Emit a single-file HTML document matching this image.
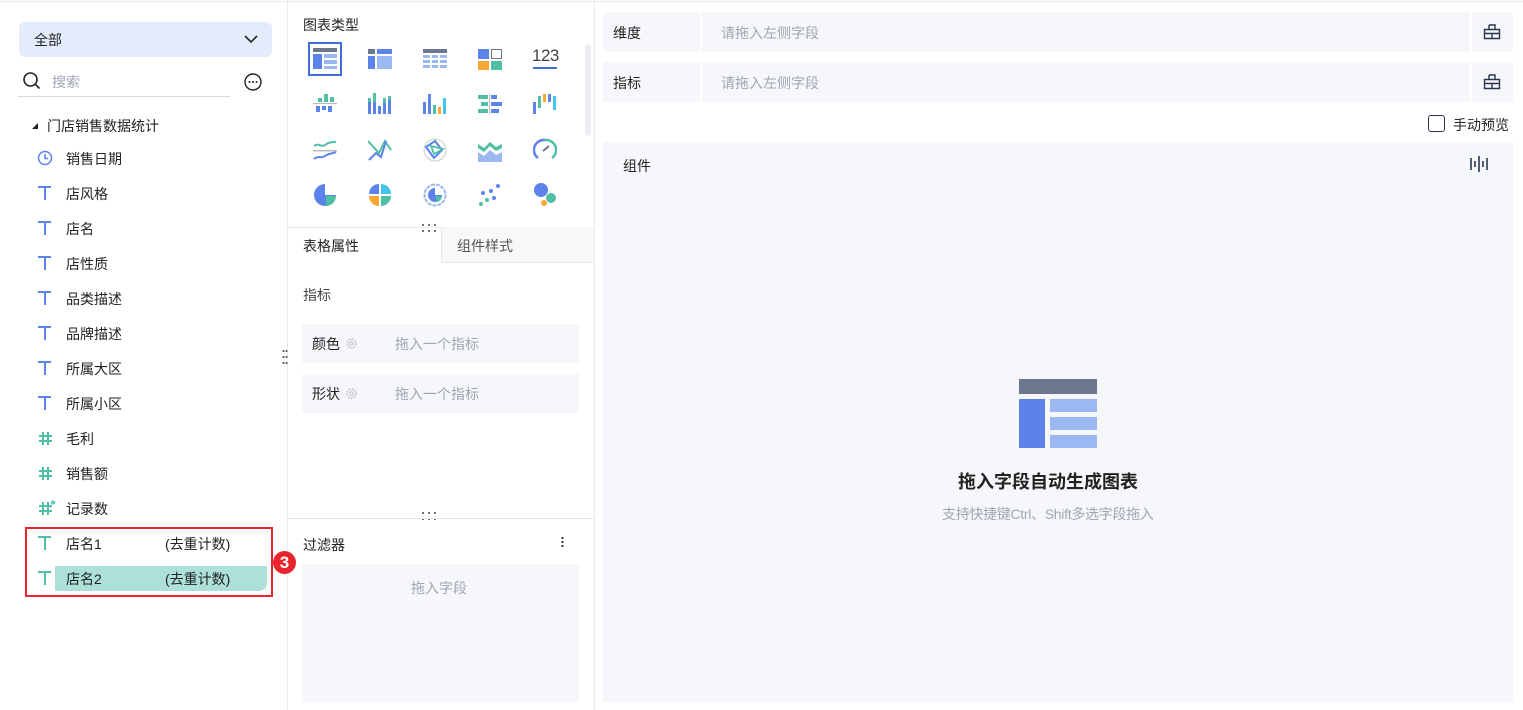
<!DOCTYPE html>
<html><head><meta charset="utf-8"><style>
*{margin:0;padding:0;box-sizing:border-box}
body{width:1523px;height:710px;overflow:hidden;background:#fff;font-family:"Liberation Sans","Noto Sans CJK SC",sans-serif;font-size:14px;color:#1f2d3d;position:relative}
.a{position:absolute}
.t{font-size:14px;color:#222}
.ph{color:#a0a6b3}
svg{position:absolute}
.ti{position:absolute;left:38px;width:14px;height:14px}.ti:before{content:"";position:absolute;left:0;top:0;width:13px;height:2px;background:#5b83ea}.ti:after{content:"";position:absolute;left:5.5px;top:0;width:2px;height:14px;background:#5b83ea}
.tg:before,.tg:after{background:#4fbfa6}
</style></head><body>
<div class="a" style="left:0;top:1px;width:1523px;height:1px;background:#e8eaef"></div>
<div class="a" style="left:287px;top:0;width:1px;height:710px;background:#e8eaef"></div>
<div class="a" style="left:594px;top:0;width:1px;height:710px;background:#e8eaef"></div>

<!-- left -->
<div class="a" style="left:19px;top:22px;width:253px;height:35px;background:#e4ecfc;border-radius:6px"></div>
<div class="a t" style="left:34px;top:30px">全部</div>
<svg style="left:243px;top:33px" width="16" height="12"><path d="M2 3l6 6 6-6" stroke="#222" stroke-width="1.6" fill="none"/></svg>
<svg style="left:22px;top:71px" width="20" height="20"><circle cx="8.5" cy="8.5" r="6.5" stroke="#222" stroke-width="1.6" fill="none"/><path d="M13.5 13.5l4 4" stroke="#222" stroke-width="1.6"/></svg>
<div class="a ph" style="left:52px;top:72px">搜索</div>
<div class="a" style="left:18px;top:96px;width:212px;height:1px;background:#d8dbe2"></div>
<svg style="left:243px;top:72px" width="20" height="20"><circle cx="10" cy="10" r="8" stroke="#222" stroke-width="1.4" fill="none"/><circle cx="6.5" cy="10" r="1" fill="#222"/><circle cx="10" cy="10" r="1" fill="#222"/><circle cx="13.5" cy="10" r="1" fill="#222"/></svg>
<svg style="left:31px;top:122px" width="8" height="8"><path d="M1 7h6V1z" fill="#222"/></svg>
<div class="a t" style="left:47px;top:116px">门店销售数据统计</div>
<svg style="left:37px;top:150px" width="16" height="16"><circle cx="8" cy="8" r="6.5" stroke="#5b83ea" stroke-width="1.5" fill="none"/><path d="M8 4v4.5h3" stroke="#5b83ea" stroke-width="1.5" fill="none"/></svg>
<div class="a t" style="left:66px;top:149px">销售日期</div>
<span class="ti" style="top:186px"></span><div class="a t" style="left:66px;top:184px">店风格</div>
<span class="ti" style="top:221px"></span><div class="a t" style="left:66px;top:219px">店名</div>
<span class="ti" style="top:256px"></span><div class="a t" style="left:66px;top:254px">店性质</div>
<span class="ti" style="top:291px"></span><div class="a t" style="left:66px;top:289px">品类描述</div>
<span class="ti" style="top:326px"></span><div class="a t" style="left:66px;top:324px">品牌描述</div>
<span class="ti" style="top:361px"></span><div class="a t" style="left:66px;top:359px">所属大区</div>
<span class="ti" style="top:396px"></span><div class="a t" style="left:66px;top:394px">所属小区</div>
<svg style="left:38px;top:431px" width="15" height="15"><path d="M5 1v13M10 1v13M1 5h13M1 10h13" stroke="#4fbfa6" stroke-width="2"/></svg><div class="a t" style="left:66px;top:429px">毛利</div>
<svg style="left:38px;top:466px" width="15" height="15"><path d="M5 1v13M10 1v13M1 5h13M1 10h13" stroke="#4fbfa6" stroke-width="2"/></svg><div class="a t" style="left:66px;top:464px">销售额</div>
<svg style="left:38px;top:499px" width="18" height="17"><path d="M5 3v13M10 3v13M1 7h13M1 12h13" stroke="#4fbfa6" stroke-width="2"/><path d="M15 1v5M12.8 2.5l4.4 2M12.8 4.5l4.4-2" stroke="#4fbfa6" stroke-width="1"/></svg><div class="a t" style="left:66px;top:499px">记录数</div>
<div class="a" style="left:25px;top:527px;width:248px;height:70px;border:2px solid #e8252d"></div>
<span class="ti tg" style="top:536px"></span><div class="a t" style="left:66px;top:534px">店名1</div><div class="a t" style="left:165px;top:534px">(去重计数)</div>
<div class="a" style="left:55px;top:566px;width:212px;height:25px;background:#ace0d9;border-radius:0 0 8px 0"></div>
<span class="ti tg" style="top:571px"></span><div class="a t" style="left:66px;top:569px">店名2</div><div class="a t" style="left:165px;top:569px">(去重计数)</div>
<div class="a" style="left:273px;top:551px;width:23px;height:23px;border-radius:50%;background:#e8252d;color:#fff;font-weight:bold;font-size:17px;text-align:center;line-height:23px">3</div>
<div class="a" style="left:282px;top:348px;width:6px;height:18px;background:radial-gradient(circle,#555 0.8px,transparent 1.2px) 0 0/3px 6px"></div>

<!-- middle -->
<div class="a t" style="left:303px;top:15px">图表类型</div>
<div class="a" style="left:585px;top:44px;width:6px;height:92px;background:#edeef2;border-radius:3px"></div>
<div class="a" style="left:308px;top:42px;width:34px;height:34px;border:2px solid #3f6ed8"></div>
<svg style="left:313px;top:47px" width="24" height="24"><rect x="0" y="1" width="24" height="4" fill="#6b778c"/><rect x="0" y="7" width="9" height="15" fill="#5b83ea"/><rect x="11" y="7" width="13" height="4" fill="#9cb8f3"/><rect x="11" y="13" width="13" height="4" fill="#9cb8f3"/><rect x="11" y="19" width="13" height="3" fill="#9cb8f3"/></svg>
<svg style="left:368px;top:47px" width="24" height="24"><rect x="0" y="2" width="7" height="5" fill="#6b778c"/><rect x="9" y="2" width="15" height="5" fill="#5b83ea"/><rect x="0" y="9" width="7" height="13" fill="#5b83ea"/><rect x="9" y="9" width="15" height="13" fill="#9cb8f3"/></svg>
<svg style="left:423px;top:47px" width="24" height="24"><rect x="0" y="2" width="24" height="4" fill="#6b778c"/><g fill="#9cb8f3"><rect x="0" y="8" width="7" height="3"/><rect x="9" y="8" width="6" height="3"/><rect x="17" y="8" width="7" height="3"/><rect x="0" y="13" width="7" height="3"/><rect x="9" y="13" width="6" height="3"/><rect x="17" y="13" width="7" height="3"/><rect x="0" y="18" width="7" height="3"/><rect x="9" y="18" width="6" height="3"/><rect x="17" y="18" width="7" height="3"/></g></svg>
<svg style="left:478px;top:47px" width="24" height="24"><rect x="0" y="2" width="11" height="10" fill="#5b83ea"/><rect x="13.5" y="2.5" width="10" height="9" fill="none" stroke="#6b778c"/><rect x="0" y="14" width="11" height="9" fill="#f7a734"/><rect x="13" y="14" width="11" height="9" fill="#4fbfa6"/></svg>
<div class="a" style="left:532px;top:46px;font-size:17px;color:#444;letter-spacing:-0.5px">123</div>
<div class="a" style="left:533px;top:67px;width:24px;height:2px;background:#3f6ed8"></div>
<svg style="left:313px;top:92px" width="24" height="24"><rect x="0" y="11" width="24" height="1" fill="#bbb"/><g fill="#4fbfa6"><rect x="5" y="6" width="4" height="4"/><rect x="11" y="2" width="4" height="8"/><rect x="17" y="5" width="4" height="5"/></g><g fill="#5b83ea"><rect x="3" y="14" width="4" height="6"/><rect x="9" y="14" width="4" height="4"/><rect x="15" y="14" width="4" height="6"/></g></svg>
<svg style="left:368px;top:92px" width="24" height="24"><g fill="#5b83ea"><rect x="0" y="10" width="3" height="12"/><rect x="5" y="10" width="3" height="12"/><rect x="10" y="14" width="3" height="8"/><rect x="15" y="11" width="3" height="11"/><rect x="20" y="8" width="3" height="14"/></g><g fill="#4fbfa6"><rect x="0" y="6" width="3" height="4"/><rect x="5" y="1" width="3" height="9"/><rect x="15" y="6" width="3" height="5"/><rect x="20" y="4" width="3" height="4"/></g></svg>
<svg style="left:423px;top:92px" width="24" height="24"><rect x="0" y="10" width="3" height="12" fill="#5b83ea"/><rect x="5" y="2" width="3" height="20" fill="#5b83ea"/><rect x="10" y="13" width="3" height="9" fill="#4fbfa6"/><rect x="15" y="15" width="3" height="7" fill="#f7a734"/><rect x="20" y="6" width="3" height="16" fill="#44c3ef"/></svg>
<svg style="left:478px;top:92px" width="24" height="24"><g fill="#4fbfa6"><rect x="0" y="3" width="10" height="4"/><rect x="3" y="10" width="7" height="4"/><rect x="0" y="17" width="10" height="4"/></g><rect x="11" y="2" width="1" height="20" fill="#bbb"/><g fill="#5b83ea"><rect x="13" y="3" width="6" height="4"/><rect x="13" y="10" width="11" height="4"/><rect x="13" y="17" width="8" height="4"/></g></svg>
<svg style="left:533px;top:92px" width="24" height="24"><rect x="0" y="10" width="3" height="12" fill="#5b83ea"/><rect x="5" y="4" width="3" height="12" fill="#4fbfa6"/><rect x="10" y="2" width="3" height="8" fill="#f7a734"/><rect x="15" y="2" width="3" height="8" fill="#5b83ea"/><rect x="20" y="4" width="3" height="14" fill="#44c3ef"/></svg>
<svg style="left:313px;top:138px" width="24" height="24"><path d="M1 8c4-4 7 2 11-1s7-3 11-3" stroke="#4fbfa6" stroke-width="2" fill="none"/><rect x="0" y="12" width="24" height="1.5" fill="#bbb"/><path d="M1 21c4-4 7 0 11-3s7-2 11-4" stroke="#5b83ea" stroke-width="2" fill="none"/></svg>
<svg style="left:368px;top:138px" width="24" height="24"><path d="M0 3l11 12 6-12 6 9" stroke="#4fbfa6" stroke-width="2" fill="none"/><path d="M1 22l7-7 5 4 5-16" stroke="#5b83ea" stroke-width="2" fill="none"/></svg>
<svg style="left:423px;top:138px" width="24" height="24"><circle cx="12" cy="12" r="11" stroke="#ccc" fill="none"/><path d="M3 9l9-6 7 9-8 8z" stroke="#5b83ea" stroke-width="2" fill="none"/><path d="M8 8l12 3-9 5z" stroke="#4fbfa6" stroke-width="1.8" fill="none"/></svg>
<svg style="left:478px;top:138px" width="24" height="24"><path d="M0 6l6 4 6-6 6 5 6-3v4l-6 3-6-5-6 6-6-4z" fill="#4fbfa6"/><path d="M0 14l6 4 6-6 6 5 6-3v10H0z" fill="#9cb8f3"/></svg>
<svg style="left:533px;top:138px" width="24" height="24"><path d="M5 20A10 10 0 0 1 12 2" stroke="#5b83ea" stroke-width="2.5" fill="none"/><path d="M12 2A10 10 0 0 1 19 20" stroke="#4fbfa6" stroke-width="2.5" fill="none"/><path d="M10 13l6-5" stroke="#6b778c" stroke-width="2"/></svg>
<svg style="left:313px;top:183px" width="24" height="24"><path d="M12 12V1A11 11 0 1 0 23 12z" fill="#5b83ea"/><path d="M13 13h10A10 10 0 0 1 13 23z" fill="#4fbfa6"/></svg>
<svg style="left:368px;top:183px" width="24" height="24"><path d="M11 11V1A10 10 0 0 0 1 11z" fill="#5b83ea"/><path d="M13 11V1A10 10 0 0 1 23 11z" fill="#44c3ef"/><path d="M11 13H1A10 10 0 0 0 11 23z" fill="#f7a734"/><path d="M13 13h10A10 10 0 0 1 13 23z" fill="#4fbfa6"/></svg>
<svg style="left:423px;top:183px" width="24" height="24"><circle cx="12" cy="12" r="10.5" stroke="#9cb8f3" stroke-width="2" fill="none" stroke-dasharray="4 1"/><path d="M12 12V5A7 7 0 1 0 19 12z" fill="#5b83ea"/><path d="M13 13h6A6 6 0 0 1 13 19z" fill="#4fbfa6"/></svg>
<svg style="left:478px;top:183px" width="24" height="24"><g fill="#5b83ea"><circle cx="20" cy="3" r="2"/><circle cx="13" cy="8" r="2"/><circle cx="16" cy="15" r="2"/><circle cx="5" cy="10" r="2"/></g><g fill="#4fbfa6"><circle cx="9" cy="17" r="2"/><circle cx="3" cy="21" r="2"/></g></svg>
<svg style="left:533px;top:183px" width="24" height="24"><circle cx="8" cy="7" r="7" fill="#5b83ea"/><circle cx="18" cy="15" r="5" fill="#4fbfa6"/><circle cx="11" cy="20" r="3" fill="#f7a734"/></svg>

<div class="a" style="left:420px;top:222px;width:18px;height:12px;background:radial-gradient(circle,#555 0.8px,transparent 1.2px) 0 0/6px 6px"></div>
<div class="a" style="left:288px;top:227px;width:306px;height:1px;background:#e6e8ee"></div>
<div class="a" style="left:441px;top:227px;width:153px;height:36px;background:#f7f8fa;border-left:1px solid #e6e8ee;border-bottom:1px solid #e6e8ee"></div>
<div class="a t" style="left:303px;top:236px">表格属性</div>
<div class="a" style="left:457px;top:236px;color:#555">组件样式</div>
<div class="a" style="left:303px;top:285px;color:#444">指标</div>
<div class="a" style="left:302px;top:324px;width:277px;height:39px;background:#f6f7fa"></div>
<div class="a t" style="left:312px;top:334px">颜色</div>
<svg style="left:345px;top:337px" width="13" height="13"><circle cx="6.5" cy="6.5" r="4.5" stroke="#bbb" stroke-width="1.2" fill="none" stroke-dasharray="2 1"/><circle cx="6.5" cy="6.5" r="1.8" stroke="#bbb" fill="none"/></svg>
<div class="a ph" style="left:395px;top:334px">拖入一个指标</div>
<div class="a" style="left:302px;top:374px;width:277px;height:39px;background:#f6f7fa"></div>
<div class="a t" style="left:312px;top:384px">形状</div>
<svg style="left:345px;top:387px" width="13" height="13"><circle cx="6.5" cy="6.5" r="4.5" stroke="#bbb" stroke-width="1.2" fill="none" stroke-dasharray="2 1"/><circle cx="6.5" cy="6.5" r="1.8" stroke="#bbb" fill="none"/></svg>
<div class="a ph" style="left:395px;top:384px">拖入一个指标</div>
<div class="a" style="left:420px;top:510px;width:18px;height:12px;background:radial-gradient(circle,#555 0.8px,transparent 1.2px) 0 0/6px 6px"></div>
<div class="a" style="left:288px;top:518px;width:306px;height:1px;background:#e6e8ee"></div>
<div class="a t" style="left:303px;top:535px">过滤器</div>
<div class="a" style="left:561px;top:536px;width:3px;height:12px;background:radial-gradient(circle,#333 1px,transparent 1.3px) 0 0/3px 4px"></div>
<div class="a" style="left:302px;top:564px;width:277px;height:138px;background:#f6f7fa"></div>
<div class="a ph" style="left:411px;top:578px">拖入字段</div>

<!-- right -->
<div class="a" style="left:603px;top:12px;width:910px;height:40px;background:#f6f7fa"></div>
<div class="a" style="left:700px;top:12px;width:2px;height:40px;background:#fff"></div>
<div class="a" style="left:1470px;top:12px;width:2px;height:40px;background:#fff"></div>
<div class="a t" style="left:613px;top:23px">维度</div><div class="a ph" style="left:721px;top:23px">请拖入左侧字段</div>
<div class="a" style="left:603px;top:62px;width:910px;height:40px;background:#f6f7fa"></div>
<div class="a" style="left:700px;top:62px;width:2px;height:40px;background:#fff"></div>
<div class="a" style="left:1470px;top:62px;width:2px;height:40px;background:#fff"></div>
<div class="a t" style="left:613px;top:73px">指标</div><div class="a ph" style="left:721px;top:73px">请拖入左侧字段</div>
<svg style="left:1483px;top:24px" width="18" height="16"><path d="M6 1h6v4M6 1v4M1.5 5.5h15v9h-15zM1.5 9.5h15M9 9.5v5" stroke="#2a3550" stroke-width="1.4" fill="none"/></svg>
<svg style="left:1483px;top:74px" width="18" height="16"><path d="M6 1h6v4M6 1v4M1.5 5.5h15v9h-15zM1.5 9.5h15M9 9.5v5" stroke="#2a3550" stroke-width="1.4" fill="none"/></svg>
<div class="a" style="left:1428px;top:115px;width:17px;height:17px;border:1.5px solid #2a3550;border-radius:3px"></div>
<div class="a t" style="left:1453px;top:115px;font-size:14px">手动预览</div>
<div class="a" style="left:603px;top:142px;width:910px;height:560px;background:#f6f7fa"></div>
<div class="a t" style="left:623px;top:156px">组件</div>
<svg style="left:1470px;top:155px" width="18" height="18"><path d="M1 3v12M5 6v6M9 1v16M13 6v6M17 3v12" stroke="#2a3550" stroke-width="1.6"/></svg>
<div class="a" style="left:1019px;top:379px;width:78px;height:15px;background:#6b778c"></div>
<div class="a" style="left:1019px;top:399px;width:26px;height:49px;background:#5b83ea"></div>
<div class="a" style="left:1050px;top:399px;width:47px;height:13px;background:#9cb8f3"></div>
<div class="a" style="left:1050px;top:417px;width:47px;height:13px;background:#9cb8f3"></div>
<div class="a" style="left:1050px;top:435px;width:47px;height:13px;background:#9cb8f3"></div>
<div class="a" style="left:958px;top:468px;font-size:18px;font-weight:bold;color:#222">拖入字段自动生成图表</div>
<div class="a" style="left:942px;top:504px;font-size:14px;color:#a0a6b3;letter-spacing:-0.3px">支持快捷键Ctrl、Shift多选字段拖入</div>
</body></html>
